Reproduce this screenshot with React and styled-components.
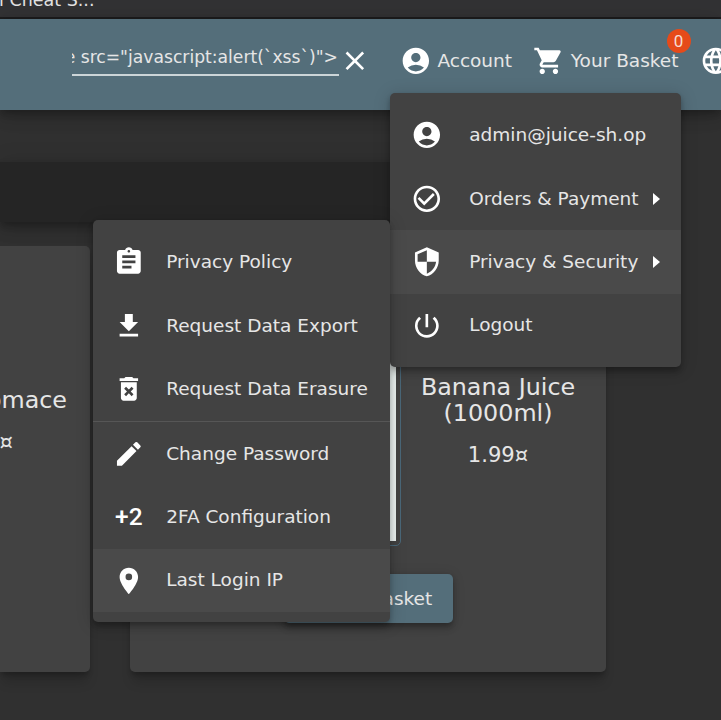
import React from "react";
import styled, { createGlobalStyle, css } from "styled-components";
import {
  MdAccountCircle,
  MdAssignment,
  MdCheckCircleOutline,
  MdClose,
  MdDeleteForever,
  MdEdit,
  MdGetApp,
  MdLanguage,
  MdLocationOn,
  MdPowerSettingsNew,
  MdSecurity,
  MdShoppingCart,
} from "react-icons/md";

const GlobalStyle = createGlobalStyle`
  *, *::before, *::after {
    box-sizing: border-box;
  }
  body {
    margin: 0;
    background: #303030;
    color: #e6e6e6;
    font-family: "DejaVu Sans", sans-serif;
    font-size: 18.5px;
    overflow: hidden;
  }
`;

//elevations
const cardShadow = css`
  box-shadow: 0 4px 5px -1px rgba(0, 0, 0, 0.22),
    0 13px 12px -3px rgba(0, 0, 0, 0.16);
`;

const raisedShadow = css`
  box-shadow: 0 2.6px 5.3px -1.3px rgba(0, 0, 0, 0.2),
    0 5.3px 6.6px 0 rgba(0, 0, 0, 0.14), 0 1.3px 13.2px 0 rgba(0, 0, 0, 0.12);
`;

const barShadow = css`
  box-shadow: 0 4px 6.6px -1.3px rgba(0, 0, 0, 0.2),
    0 8px 13px 0 rgba(0, 0, 0, 0.14), 0 1.3px 24px 0 rgba(0, 0, 0, 0.12);
`;

const menuShadow = css`
  box-shadow: 0 2.6px 5.3px -1.3px rgba(0, 0, 0, 0.2),
    0 5.3px 6.6px 0 rgba(0, 0, 0, 0.14), 0 2px 17px 1px rgba(0, 0, 0, 0.14);
`;

const Page = styled.div`
  position: relative;
  display: flex;
  flex-direction: column;
  width: 721px;
  height: 720px;
  overflow: hidden;
`;

const TabStrip = styled.div`
  flex: none;
  display: flex;
  align-items: flex-end;
  width: 100%;
  height: 19px;
  padding-bottom: 6px;
  background: #323234;
  border-bottom: 2px solid #1d1d1e;
`;

const TabTitle = styled.span`
  width: 94.5px;
  display: flex;
  justify-content: flex-end;
  font-size: 17.5px;
  line-height: 22px;
  white-space: nowrap;
  color: #e4e4e4;
`;

//header
const Toolbar = styled.header`
  position: relative;
  z-index: 1;
  flex: none;
  display: flex;
  align-items: center;
  height: 91px;
  padding: 0 0 7px 72px;
  background: #546e7a;
  white-space: nowrap;
  ${barShadow}
`;

const SearchField = styled.div`
  flex: none;
  display: flex;
  justify-content: flex-end;
  width: 267px;
  height: 32px;
  margin-top: -2px;
  padding-right: 1px;
  overflow: hidden;
  border-bottom: 2px solid #ccd5d8;
  font-size: 17.16px;
  line-height: 26px;
`;

const IconBox = styled.span`
  flex: none;
  display: flex;
  color: #fff;
  svg {
    width: 31.7px;
    height: 31.7px;
  }
`;

const ClearButton = styled(IconBox)`
  margin-right: 29px;
`;

const NavButton = styled.div`
  position: relative;
  flex: none;
  display: flex;
  align-items: center;
  gap: 6px;
  margin-right: 21px;
`;

const Label = styled.span`
  flex: none;
  margin-top: -1px;
`;

const Badge = styled.span`
  position: absolute;
  top: -16px;
  right: -12px;
  width: 24px;
  height: 24px;
  border-radius: 50%;
  background: #e64a19;
  color: #f6dcd3;
  font: 17px/24px Roboto, sans-serif;
  text-align: center;
`;

//products
const Main = styled.main`
  flex: 1;
  padding-top: 52px;
`;

const ResultsBar = styled.div`
  width: 606px;
  height: 60px;
  background: #252525;
  ${barShadow}
`;

const Products = styled.div`
  display: flex;
  gap: 40px;
  margin-top: 24px;
`;

const Card = styled.article`
  flex: none;
  display: flex;
  flex-direction: column;
  align-items: center;
  width: ${(props) => props.$width}px;
  height: 426px;
  border-radius: 5px;
  background: #424242;
  ${cardShadow}
`;

const LeftCard = styled(Card)`
  align-items: flex-end;
  border-top-left-radius: 0;
  border-bottom-left-radius: 0;
  padding: 141px 23px 0 0;
`;

const ProductBody = styled.div`
  display: flex;
  align-self: stretch;
  height: 300px;
  margin-bottom: 28px;
`;

const Picture = styled.div`
  width: 245px;
  margin-left: 26px;
  padding: 4px;
  border: 1.3px solid #4a6778;
  border-radius: 5px;
  &::before {
    content: "";
    display: block;
    height: 100%;
    background: #e9f0ee;
  }
`;

const Details = styled.div`
  width: 194px;
  padding-top: 128px;
  text-align: center;
`;

const Name = styled.div`
  font-size: 23.8px;
  line-height: 26.4px;
  white-space: nowrap;
`;

const Price = styled.div`
  margin-top: 15px;
  font-size: 21.1px;
  line-height: 26px;
`;

const LeftPrice = styled(Price)`
  margin-top: 16px;
  margin-right: 54px;
`;

const BasketButton = styled.button`
  width: 169px;
  height: 49px;
  padding: 0;
  border: 0;
  border-radius: 5px;
  background: #546e7a;
  color: #e6e6e6;
  font: inherit;
  ${raisedShadow}
`;

//menus
const Menu = styled.nav`
  position: absolute;
  z-index: ${(props) => props.$level};
  left: ${(props) => props.$left}px;
  top: ${(props) => props.$top}px;
  width: ${(props) => props.$width}px;
  padding: 10.5px 0 9.7px;
  border-radius: 5px;
  background: #424242;
  ${menuShadow}
`;

const Item = styled.div`
  display: flex;
  align-items: center;
  height: 63.4px;
  padding: 0 21px 0 20.5px;
  white-space: nowrap;
  background: ${(props) => (props.$active ? "#4a4a4a" : "transparent")};
  ${IconBox} {
    margin-right: ${(props) => props.$gap}px;
  }
`;

const PlusTwo = styled.span`
  width: 31.7px;
  font: 500 24.5px/32px Roboto, sans-serif;
  text-align: center;
`;

const Arrow = styled.i`
  margin-left: auto;
  border: 6.6px solid transparent;
  border-left: 7px solid #fff;
  border-right-width: 0;
`;

const Divider = styled.div`
  height: 1.3px;
  background: #565656;
`;

const accountItems = [
  { icon: MdAccountCircle, label: "admin@juice-sh.op" },
  { icon: MdCheckCircleOutline, label: "Orders & Payment", sub: true },
  { icon: MdSecurity, label: "Privacy & Security", sub: true, active: true },
  { icon: MdPowerSettingsNew, label: "Logout" },
];

const privacyItems = [
  { icon: MdAssignment, label: "Privacy Policy" },
  { icon: MdGetApp, label: "Request Data Export" },
  { icon: MdDeleteForever, label: "Request Data Erasure", divider: true },
  { icon: MdEdit, label: "Change Password" },
  { label: "2FA Configuration" },
  { icon: MdLocationOn, label: "Last Login IP", active: true },
];

function MenuItems({ items, gap }) {
  return items.map(({ icon: Icon, label, sub, active, divider }) => (
    <React.Fragment key={label}>
      <Item $gap={gap} $active={active}>
        <IconBox>{Icon ? <Icon /> : <PlusTwo>+2</PlusTwo>}</IconBox>
        <Label>{label}</Label>
        {sub && <Arrow />}
      </Item>
      {divider && <Divider />}
    </React.Fragment>
  ));
}

export default function App() {
  return (
    <Page>
      <GlobalStyle />
      <TabStrip>
        <TabTitle>l Cheat S...</TabTitle>
      </TabStrip>

      <Toolbar>
        <SearchField>
          <span>{'e src="javascript:alert(`xss`)">'}</span>
        </SearchField>
        <ClearButton>
          <MdClose />
        </ClearButton>
        <NavButton>
          <IconBox>
            <MdAccountCircle />
          </IconBox>
          <Label>Account</Label>
        </NavButton>
        <NavButton>
          <IconBox>
            <MdShoppingCart />
          </IconBox>
          <Label>Your Basket</Label>
          <Badge>0</Badge>
        </NavButton>
        <IconBox>
          <MdLanguage />
        </IconBox>
      </Toolbar>

      <Main>
        <ResultsBar />
        <Products>
          <LeftCard $width={90}>
            <Name>Pomace</Name>
            <LeftPrice>0.89¤</LeftPrice>
          </LeftCard>
          <Card $width={476}>
            <ProductBody>
              <Picture />
              <Details>
                <Name>
                  Banana Juice
                  <br />
                  (1000ml)
                </Name>
                <Price>1.99¤</Price>
              </Details>
            </ProductBody>
            <BasketButton>Add to Basket</BasketButton>
          </Card>
        </Products>
      </Main>

      <Menu $level={2} $left={390} $top={93} $width={291}>
        <MenuItems items={accountItems} gap={27} />
      </Menu>
      <Menu $level={3} $left={92.5} $top={220} $width={297}>
        <MenuItems items={privacyItems} gap={21.5} />
      </Menu>
    </Page>
  );
}
